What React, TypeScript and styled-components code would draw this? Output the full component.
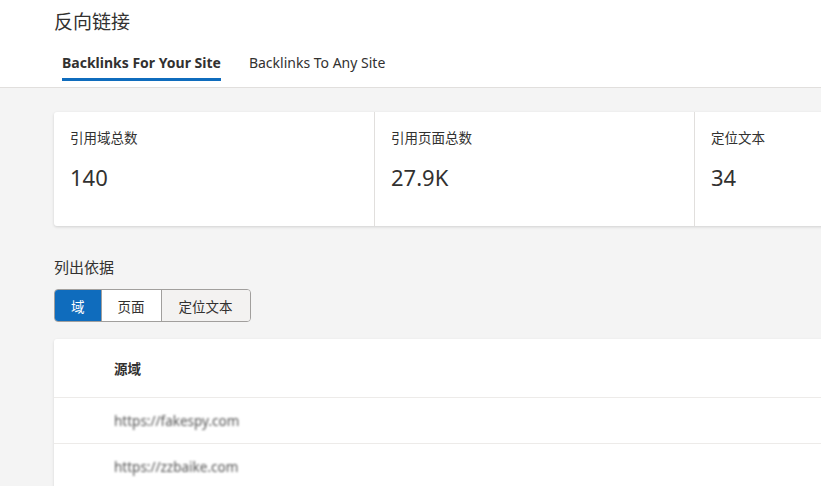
import styled, { createGlobalStyle } from "styled-components";

const Global = createGlobalStyle`
  html, body { margin: 0; padding: 0; }
  body {
    background: #f4f4f4;
    font-family: "Segoe UI", "Noto Sans", "Noto Sans CJK SC", sans-serif;
    color: #323130;
    overflow: hidden;
  }
`;

const Header = styled.header`
  background: #fff;
  border-bottom: 1px solid #e1dfdd;
  padding: 9px 0 0 54px;
  height: 78px;
  box-sizing: content-box;
`;

const Title = styled.h1`
  margin: 0;
  font-size: 19px;
  font-weight: 400;
  line-height: 26px;
`;

const Tabs = styled.nav`
  display: flex;
  gap: 28px;
  margin-top: 18px;
  padding-left: 8px;
`;

const Tab = styled.div<{ $active?: boolean }>`
  font-size: 14px;
  font-weight: ${(p) => (p.$active ? 700 : 400)};
  line-height: 20px;
  padding-bottom: 5px;
  border-bottom: 3px solid ${(p) => (p.$active ? "#0f6cbd" : "transparent")};
`;

const Main = styled.main`
  padding: 24px 0 0 54px;
  overflow: hidden;
`;

const Stats = styled.section`
  display: grid;
  grid-template-columns: 320px 320px 1fr;
  margin-right: -20px;
  background: #fff;
  border-radius: 3px 0 0 3px;
  box-shadow: 0 1px 3px rgba(0, 0, 0, 0.15);
  height: 114px;
`;

const Stat = styled.div`
  padding: 16px 16px 0;
  border-left: 1px solid #e1dfdd;
  &:first-child { border-left: none; }
`;

const StatLabel = styled.div`
  font-size: 13.5px;
  line-height: 20px;
`;

const StatValue = styled.div`
  font-size: 22px;
  line-height: 30px;
  margin-top: 14px;
`;

const SectionTitle = styled.h2`
  margin: 30px 0 0;
  font-size: 15px;
  font-weight: 400;
  line-height: 22px;
`;

const Segments = styled.div`
  display: inline-flex;
  margin-top: 11px;
  border: 1px solid #a19f9d;
  border-radius: 4px;
  overflow: hidden;
`;

const Segment = styled.div<{ $active?: boolean; $muted?: boolean }>`
  height: 31px;
  display: flex;
  align-items: center;
  padding: 0 16px;
  font-size: 13.5px;
  background: ${(p) => (p.$active ? "#0f6cbd" : p.$muted ? "#f3f2f1" : "#fff")};
  color: ${(p) => (p.$active ? "#fff" : "#323130")};
  & + & { border-left: 1px solid #a19f9d; }
  &:last-child { padding: 0 17px; }
`;

const Table = styled.section`
  margin-top: 17px;
  margin-right: -20px;
  background: #fff;
  box-shadow: 0 1px 3px rgba(0, 0, 0, 0.12);
  border-radius: 3px 0 0 0;
`;

const HeadRow = styled.div`
  height: 58px;
  display: flex;
  align-items: center;
  padding-left: 60px;
  font-size: 13.5px;
  font-weight: 700;
  border-bottom: 1px solid #edebe9;
`;

const Row = styled.div`
  height: 45px;
  display: flex;
  align-items: center;
  padding-left: 60px;
  font-size: 13.5px;
  border-bottom: 1px solid #edebe9;
`;

const Blurred = styled.span`
  filter: blur(0.8px);
  color: #555;
`;

export default function App() {
  const stats = [
    { label: "引用域总数", value: "140" },
    { label: "引用页面总数", value: "27.9K" },
    { label: "定位文本", value: "34" },
  ];
  const rows = ["https://fakespy.com", "https://zzbaike.com"];

  return (
    <>
      <Global />
      <Header>
        <Title>反向链接</Title>
        <Tabs>
          <Tab $active>Backlinks For Your Site</Tab>
          <Tab>Backlinks To Any Site</Tab>
        </Tabs>
      </Header>
      <Main>
        <Stats>
          {stats.map((s) => (
            <Stat key={s.label}>
              <StatLabel>{s.label}</StatLabel>
              <StatValue>{s.value}</StatValue>
            </Stat>
          ))}
        </Stats>
        <SectionTitle>列出依据</SectionTitle>
        <Segments>
          <Segment $active>域</Segment>
          <Segment>页面</Segment>
          <Segment $muted>定位文本</Segment>
        </Segments>
        <Table>
          <HeadRow>源域</HeadRow>
          {rows.map((r) => (
            <Row key={r}>
              <Blurred>{r}</Blurred>
            </Row>
          ))}
        </Table>
      </Main>
    </>
  );
}
